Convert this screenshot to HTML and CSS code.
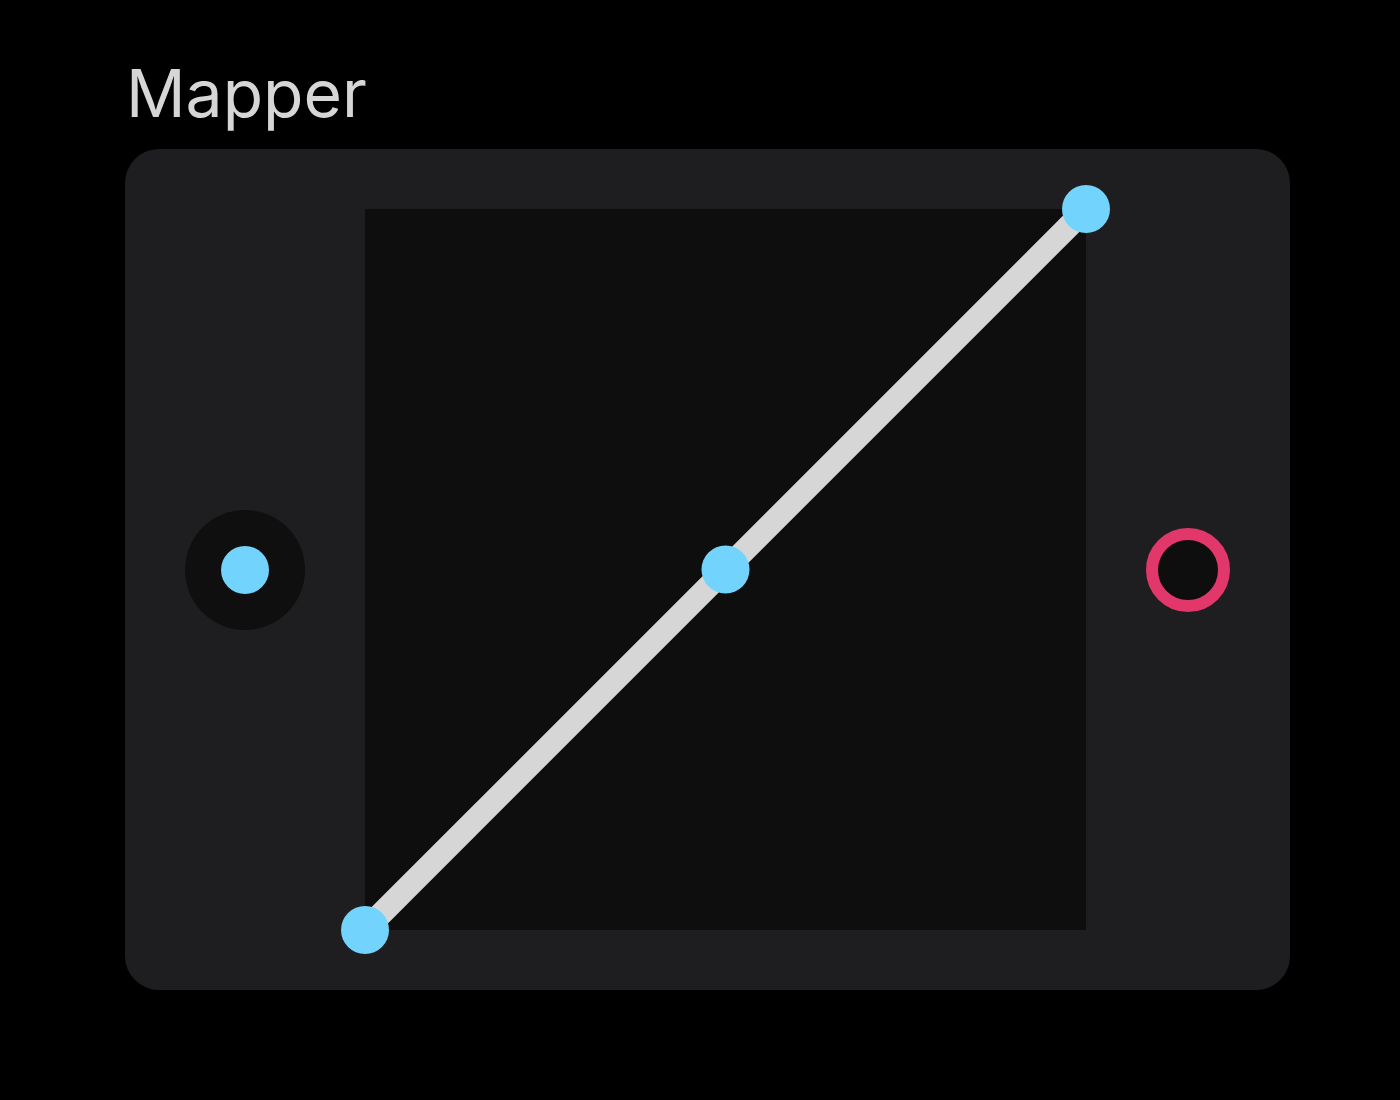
FILE: index.html
```html
<!DOCTYPE html>
<html>
<head>
<meta charset="utf-8">
<link rel="stylesheet" href="styles.css">
</head>
<body>
<div class="page">
  <h1 class="title">Mapper</h1>
  <div class="card">
    <div class="side side-left">
      <div class="knob"><div class="knob-dot"></div></div>
    </div>
    <div class="graph">
      <svg class="graph-svg" width="721" height="721" viewBox="0 0 721 721">
        <line x1="0" y1="721" x2="721" y2="0" stroke="#d6d6d6" stroke-width="23"/>
        <circle cx="0" cy="721" r="24" fill="#72d3fc"/>
        <circle cx="360.5" cy="360.5" r="24" fill="#72d3fc"/>
        <circle cx="721" cy="0" r="24" fill="#72d3fc"/>
      </svg>
    </div>
    <div class="side side-right">
      <div class="ring"></div>
    </div>
  </div>
</div>
</body>
</html>
```
FILE: styles.css
```css
html, body {
  margin: 0;
  padding: 0;
  background: #000;
}
.page {
  padding: 54px 0 0 125px;
  width: 1165px;
}
.title {
  margin: 0 0 0 1px;
  font-family: Inter, "Liberation Sans", sans-serif;
  font-weight: 400;
  font-size: 66px;
  line-height: 78px;
  height: 95px;
  color: #d6d6d6;
  letter-spacing: 0;
}
.card {
  display: flex;
  background: #1e1e20;
  border-radius: 34px;
  height: 841px;
  width: 1165px;
}
.side {
  display: flex;
  align-items: center;
  justify-content: center;
}
.side-left {
  width: 240px;
}
.side-right {
  flex: 1;
}
.graph {
  padding-top: 60px;
  width: 721px;
}
.graph-svg {
  display: block;
  overflow: visible;
  background: #0e0e0e;
}
.knob {
  width: 120px;
  height: 120px;
  border-radius: 50%;
  background: #0f0f0f;
  display: flex;
  align-items: center;
  justify-content: center;
}
.knob-dot {
  width: 48px;
  height: 48px;
  border-radius: 50%;
  background: #72d3fc;
}
.ring {
  width: 60px;
  height: 60px;
  border-radius: 50%;
  border: 12px solid #e1376a;
  background: #0e0e0e;
}
```
